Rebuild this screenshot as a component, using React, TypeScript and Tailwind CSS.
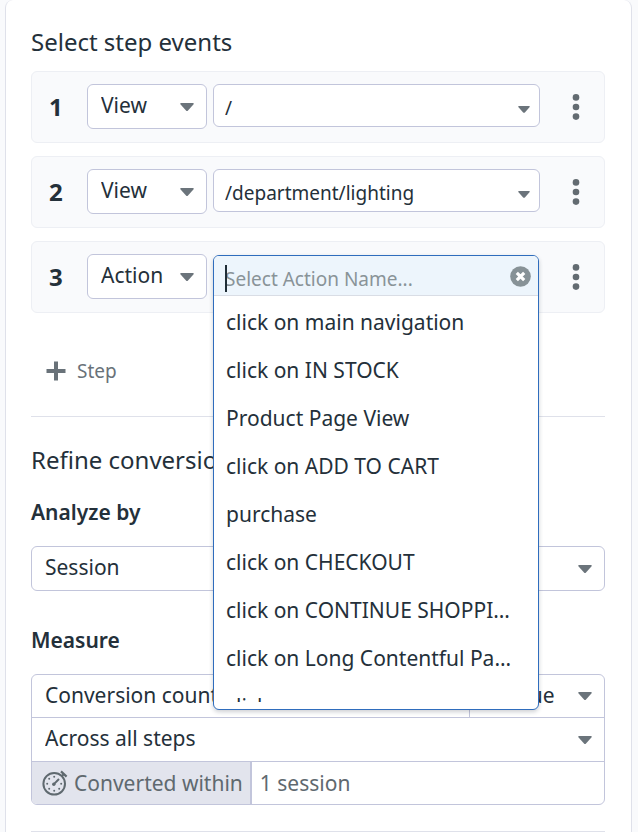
import type { ReactNode } from "react";

const ACTIONS = [
  "click on main navigation",
  "click on IN STOCK",
  "Product Page View",
  "click on ADD TO CART",
  "purchase",
  "click on CHECKOUT",
  "click on CONTINUE SHOPPING",
  "click on Long Contentful Paint",
  "click",
];

function Caret({ small = false }: { small?: boolean }) {
  return (
    <svg
      viewBox="0 0 14 8"
      aria-hidden="true"
      className={
        small
          ? "pointer-events-none absolute right-[9px] top-1/2 h-[7px] w-3 text-[#6b747b]"
          : "pointer-events-none absolute right-3 top-1/2 h-2 w-3.5 -translate-y-1/2 text-[#6b747b]"
      }
    >
      <path d="M0.9 0H13.1Q14.2 0.6 13.4 1.5L8 7.4Q7 8.4 6 7.4L0.6 1.5Q-0.2 0.6 0.9 0Z" fill="currentColor" />
    </svg>
  );
}

function Dropdown({ label, value, className }: { label: string; value: string; className: string }) {
  return (
    <div className={`relative ${className}`}>
      <select
        aria-label={label}
        defaultValue={value}
        className="block h-full w-full appearance-none rounded-[inherit] bg-transparent pb-[3px] pl-[13px] pr-8 text-[21px] leading-7 outline-none"
      >
        <option>{value}</option>
      </select>
      <Caret />
    </div>
  );
}

function Step({ index, kind, children }: { index: number; kind: string; children: ReactNode }) {
  return (
    <li className="flex h-[72px] items-start rounded-md border border-[#edeff4] bg-[#f9fafc] pt-3">
      <span className="w-[55px] pl-[17px] text-[24px] font-bold leading-[46px]">{index}</span>
      <Dropdown label={`Step ${index} type`} value={kind} className="h-[45px] w-[120px] rounded-md border border-[#c2c5db] bg-white" />
      <div className="relative ml-1.5 min-w-0 flex-1">{children}</div>
      <button type="button" aria-label={`Step ${index} options`} className="flex h-[46px] w-16 items-center justify-center pl-[7px] text-[#636b71]">
        <svg viewBox="0 0 8 26" className="h-[26px] w-2" fill="currentColor" aria-hidden="true">
          <circle cx="4" cy="3.4" r="3.3" />
          <circle cx="4" cy="13" r="3.3" />
          <circle cx="4" cy="22.6" r="3.3" />
        </svg>
      </button>
    </li>
  );
}

function PathSelect({ label, value }: { label: string; value: string }) {
  return (
    <div className="relative h-[43px] rounded-md border border-[#c2c5db] bg-white">
      <select
        aria-label={label}
        defaultValue={value}
        className="block h-full w-full appearance-none rounded-md bg-transparent pl-[11px] pr-8 pt-1 text-[19px] leading-7 outline-none"
      >
        <option>{value}</option>
      </select>
      <Caret small />
    </div>
  );
}

function ActionPicker() {
  return (
    <div className="absolute left-0 right-px top-px z-10 rounded-md border border-[#2f6dbd] bg-white pb-[7px] shadow-[0_2px_4px_rgba(30,40,60,0.22)]">
      <div className="relative flex h-10 items-center rounded-t-[5px] border-b border-[#d9dde5] bg-[#edf5fc]">
        <input
          type="text"
          aria-label="Action name"
          placeholder="Select Action Name..."
          className="h-full min-w-0 flex-1 bg-transparent pl-[11px] pt-1.5 text-[19px] outline-none placeholder:text-[#899398]"
        />
        <span className="absolute left-[11px] top-[9px] h-[27px] w-0.5 bg-[#1f2d36]" />
        <button type="button" aria-label="Clear" className="mr-[7px] pt-px text-[#879297]">
          <svg viewBox="0 0 21 21" className="h-[21px] w-[21px]" aria-hidden="true">
            <circle cx="10.5" cy="10.5" r="10.3" fill="currentColor" />
            <path d="M6.8 6.8L14.2 14.2M14.2 6.8L6.8 14.2" stroke="white" strokeWidth="3.2" />
          </svg>
        </button>
      </div>
      <ul className="h-[406px] overflow-hidden pt-0.5" role="listbox" aria-label="Actions">
        {ACTIONS.map((name) => (
          <li key={name} role="option" aria-selected="false" className="truncate pl-3 pr-6 text-[21px] leading-[48px]">
            {name}
          </li>
        ))}
      </ul>
    </div>
  );
}

function Stopwatch() {
  return (
    <svg viewBox="0 0 26 26" className="h-[26px] w-[26px] shrink-0" fill="none" stroke="currentColor" aria-hidden="true">
      <circle cx="12.2" cy="13.8" r="10.8" strokeWidth="2" />
      <path d="M19 1.4L24.6 6.6M21.8 4L19.4 6.6" strokeWidth="2.2" />
      <path d="M11.4 14.6L17 9" strokeWidth="2" />
      <circle cx="11.8" cy="14.2" r="1.7" fill="currentColor" stroke="none" />
      <g fill="currentColor" stroke="none">
        <circle cx="12.2" cy="6.8" r="1" />
        <circle cx="7.2" cy="8.8" r="1" />
        <circle cx="5.2" cy="13.8" r="1" />
        <circle cx="7.2" cy="18.8" r="1" />
        <circle cx="12.2" cy="20.8" r="1" />
        <circle cx="17.2" cy="18.8" r="1" />
        <circle cx="19.2" cy="13.8" r="1" />
      </g>
    </svg>
  );
}

export default function App() {
  return (
    <main className="min-h-screen bg-[#f9fafc] pl-[5px] pr-1.5 font-['Noto_Sans',sans-serif] text-[#24303a]">
      <div className="min-h-screen rounded-t-lg border-x border-[#dfe1ea] bg-white pl-[25px] pr-[26px] pt-[26px]">
        <section>
          <h2 className="text-[24px] leading-8">Select step events</h2>
          <ol className="mt-[13px] flex flex-col gap-[13px]">
            <Step index={1} kind="View">
              <PathSelect label="Step 1 page" value="/" />
            </Step>
            <Step index={2} kind="View">
              <PathSelect label="Step 2 page" value="/department/lighting" />
            </Step>
            <Step index={3} kind="Action">
              <ActionPicker />
            </Step>
          </ol>
          <button type="button" className="mt-[42px] flex h-8 items-center gap-[11px] pl-[15px] text-[19px] text-[#697279]">
            <svg viewBox="0 0 20 20" className="h-5 w-5" stroke="currentColor" strokeWidth="4" aria-hidden="true">
              <path d="M10 0.5V19.5M0.5 10H19.5" />
            </svg>
            Step
          </button>
        </section>

        <section className="mt-[29px] border-t border-[#dfe1ea] pt-[27px]">
          <h2 className="text-[24px] leading-8">Refine conversion</h2>
          <h3 className="mt-5 text-[21px] font-semibold leading-8">Analyze by</h3>
          <Dropdown label="Analyze by" value="Session" className="mt-[18px] h-[45px] rounded-md border border-[#c2c5db] bg-white" />
          <h3 className="mt-[33px] text-[21px] font-semibold leading-8">Measure</h3>
          <div className="mt-[18px] rounded-md border border-[#c2c5db]">
            <div className="flex h-[43px] border-b border-[#c2c5db]">
              <Dropdown label="Measure" value="Conversion counts" className="flex-1" />
              <Dropdown label="Count mode" value="Unique" className="w-[135px] border-l border-[#c2c5db]" />
            </div>
            <Dropdown label="Steps" value="Across all steps" className="h-11 border-b border-[#c2c5db]" />
            <div className="flex h-[42px] text-[21px] text-[#5f696f]">
              <label htmlFor="window" className="flex items-center gap-1.5 rounded-bl-[5px] border-r-2 border-[#c2c5db] bg-[#e2e4ed] pl-2.5 pr-[7px]">
                <Stopwatch />
                <span className="pt-0.5">Converted within</span>
              </label>
              <input id="window" defaultValue="1 session" className="min-w-0 flex-1 rounded-br-[5px] bg-transparent pl-2 pt-0.5 outline-none" />
            </div>
          </div>
        </section>
        <hr className="mt-[26px] border-[#dfe1ea]" />
      </div>
    </main>
  );
}
